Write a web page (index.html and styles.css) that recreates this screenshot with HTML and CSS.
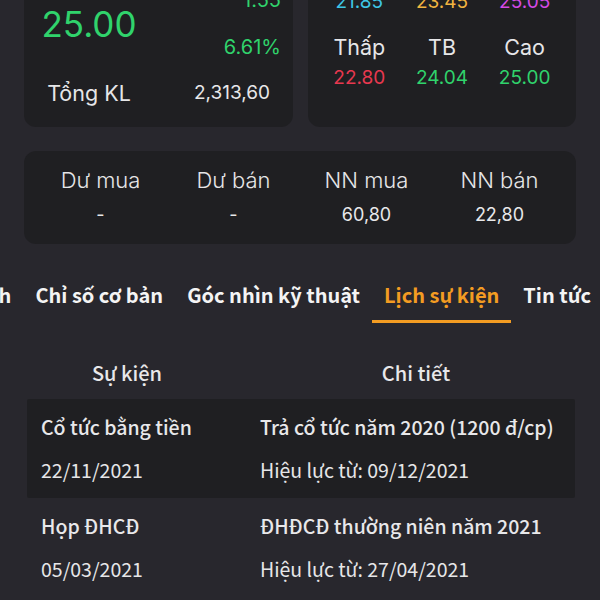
FILE: index.html
```html
<!DOCTYPE html>
<html lang="vi">
<head>
<meta charset="utf-8">
<link rel="stylesheet" href="styles.css">
</head>
<body>
<div class="page">
  <div class="summary">
    <div class="card price-card">
      <div class="price-top">
        <div class="big-price up">25.00</div>
        <div class="change">
          <div class="up">1.55</div>
          <div class="up">6.61%</div>
        </div>
      </div>
      <div class="price-bottom">
        <div class="label">Tổng KL</div>
        <div class="value">2,313,60</div>
      </div>
    </div>
    <div class="card range-card">
      <div class="cell cyan">21.85</div>
      <div class="cell yellow">23.45</div>
      <div class="cell magenta">25.05</div>
      <div class="cell label gap">Thấp</div>
      <div class="cell label gap">TB</div>
      <div class="cell label gap">Cao</div>
      <div class="cell red">22.80</div>
      <div class="cell up">24.04</div>
      <div class="cell up">25.00</div>
    </div>
  </div>

  <div class="card flow-card">
    <div class="cell label">Dư mua</div>
    <div class="cell label">Dư bán</div>
    <div class="cell label">NN mua</div>
    <div class="cell label">NN bán</div>
    <div class="cell value">-</div>
    <div class="cell value">-</div>
    <div class="cell value">60,80</div>
    <div class="cell value">22,80</div>
  </div>

  <nav class="tabs">
    <div class="tab">Tài chính</div>
    <div class="tab">Chỉ số cơ bản</div>
    <div class="tab">Góc nhìn kỹ thuật</div>
    <div class="tab active">Lịch sự kiện</div>
    <div class="tab">Tin tức</div>
  </nav>

  <div class="events">
    <div class="ev-head">
      <div>Sự kiện</div>
      <div>Chi tiết</div>
    </div>
    <div class="ev-row shaded">
      <div class="ev-title">Cổ tức bằng tiền</div>
      <div class="ev-title">Trả cổ tức năm 2020 (1200 đ/cp)</div>
      <div class="ev-sub">22/11/2021</div>
      <div class="ev-sub">Hiệu lực từ: 09/12/2021</div>
    </div>
    <div class="ev-row">
      <div class="ev-title">Họp ĐHCĐ</div>
      <div class="ev-title">ĐHĐCĐ thường niên năm 2021</div>
      <div class="ev-sub">05/03/2021</div>
      <div class="ev-sub">Hiệu lực từ: 27/04/2021</div>
    </div>
  </div>
</div>
</body>
</html>
```

FILE: styles.css
```css
* { box-sizing: border-box; }
html, body { margin: 0; padding: 0; }
body {
  background: #28272d;
  color: #e8e8ea;
  font-family: Inter, "Noto Sans", sans-serif;
  width: 600px;
  height: 600px;
  overflow: hidden;
}
.page { width: 600px; }

.card {
  background: #1f1f22;
  border-radius: 12px;
}

.up { color: #30d36c; }
.red { color: #e8384f; }
.cyan { color: #3ec6e6; }
.yellow { color: #f1b440; }
.magenta { color: #d44ae4; }

.summary {
  display: grid;
  grid-template-columns: 269px 268px;
  gap: 15px;
  margin: -28px 24px 0 24px;
}

/* price card */
.price-card {
  padding: 14px 12px 20px 17px;
  display: flex;
  flex-direction: column;
}
.price-top {
  display: flex;
  justify-content: space-between;
  align-items: center;
}
.big-price {
  font-size: 35px;
  line-height: 40px;
  width: 96px;
  text-align: center;
}
.change {
  display: flex;
  flex-direction: column;
  align-items: flex-end;
  gap: 19px;
  font-size: 20px;
  line-height: 28px;
}
.price-bottom {
  display: flex;
  justify-content: space-between;
  align-items: center;
  margin-top: 18px;
  padding-right: 11px;
  line-height: 28px;
}
.price-bottom .label {
  width: 96px;
  text-align: center;
  font-size: 21.5px;
}
.price-bottom .value {
  font-size: 19px;
}

/* range card */
.range-card {
  padding: 15px 10px 34px 10px;
  display: grid;
  grid-template-columns: repeat(3, 1fr);
  font-size: 19px;
  line-height: 30px;
}
.range-card .cell { text-align: center; }
.range-card .gap { margin-top: 15px; font-size: 21.5px; }
.range-card .red, .range-card .up:not(.gap) { margin-top: 1px; }
.label { color: #e6e6e8; }

/* flow card */
.flow-card {
  margin: 24px 24px 0 24px;
  padding: 15px 10px;
  display: grid;
  grid-template-columns: repeat(4, 1fr);
  row-gap: 6px;
  line-height: 28px;
}
.flow-card .cell { text-align: center; }
.flow-card .label { font-size: 22px; font-weight: 300; }
.flow-card .value { font-size: 18px; margin-top: 1px; }

/* tabs */
.tabs {
  display: flex;
  justify-content: flex-end;
  overflow: hidden;
  margin-top: 37px;
  margin-right: -3px;
  font-family: "Noto Sans CJK SC", "Noto Sans", sans-serif;
  font-weight: 700;
  font-size: 20px;
  line-height: 28px;
}
.tab {
  flex-shrink: 0;
  white-space: nowrap;
  padding: 0 12px 11px;
  border-bottom: 3px solid transparent;
  color: #f4f4f4;
}
.tab.active {
  color: #f39c22;
  border-bottom-color: #f39c22;
}

/* events */
.events {
  margin: 0 25px 0 27px;
  font-family: "Noto Sans CJK SC", "Noto Sans", sans-serif;
}
.ev-head, .ev-row {
  display: grid;
  grid-template-columns: 172px 1fr;
  column-gap: 47px;
  padding: 0 3px 0 14px;
}
.ev-head {
  margin-top: 36px;
  padding-bottom: 12px;
  text-align: center;
  font-size: 20px;
  line-height: 28px;
  font-weight: 500;
}
.ev-row {
  padding-top: 14px;
  padding-bottom: 14px;
  row-gap: 15px;
  font-size: 19.5px;
  line-height: 28px;
  white-space: nowrap;
}
.ev-row.shaded {
  background: #1f1f22;
  border-radius: 2px;
}
.ev-title { font-weight: 500; }
.ev-sub { font-weight: 400; color: #e6e6e8; }
```
